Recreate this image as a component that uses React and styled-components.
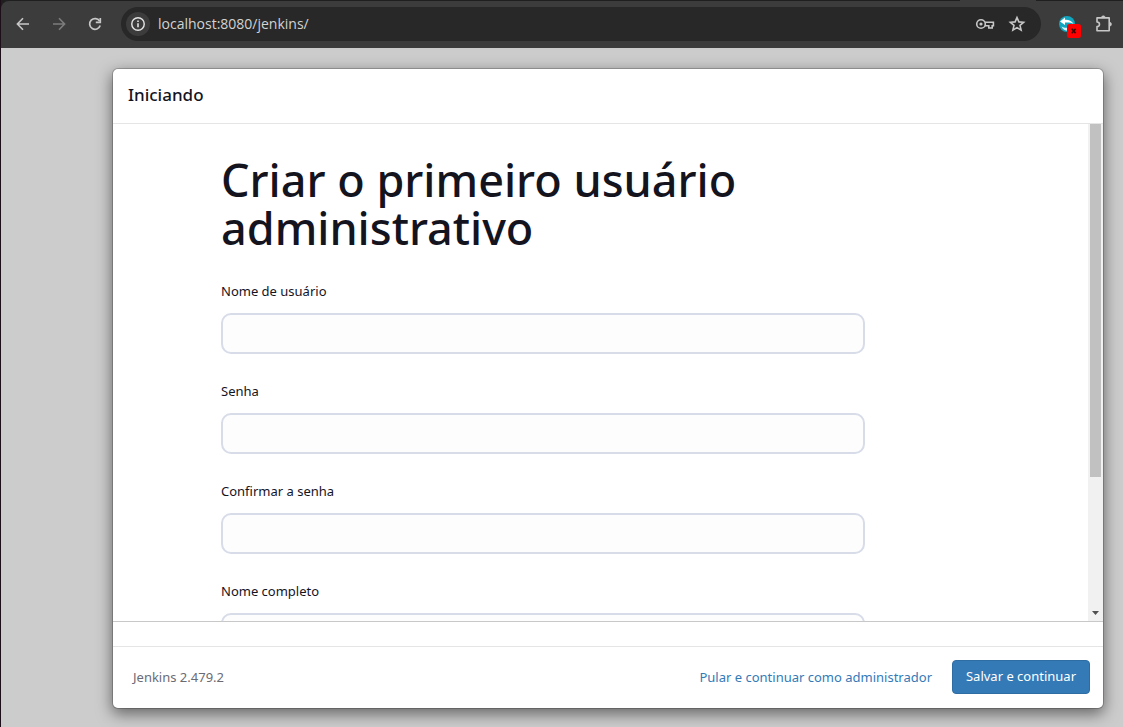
import React from "react";
import styled, { createGlobalStyle } from "styled-components";

const GlobalStyle = createGlobalStyle`
  *, *::before, *::after { box-sizing: border-box; }
  body {
    margin: 0;
    font-family: "Noto Sans", "Open Sans", sans-serif;
    font-size: 13px;
    line-height: 20px;
    color: #14141f;
  }
  button, input { font: inherit; }
`;

const Window = styled.div`
  display: flex;
  flex-direction: column;
  height: 100vh;
  min-height: 480px;
  overflow: hidden;
  border-left: 1px solid #1c0f1a;
  background: #1f1f1f;
`;

const TabStrip = styled.div`
  display: flex;
  justify-content: flex-end;
  flex: none;
  height: 1px;
  padding-right: 87px;
`;

const ActiveTab = styled.div`
  width: 76px;
  background: #3c3c3c;
`;

const Toolbar = styled.header`
  display: flex;
  align-items: center;
  flex: none;
  height: 47px;
  padding: 0 2px 2px 8px;
  background: #3c3c3c;
  border-radius: 8px 0 0 0;
`;

const NavGroup = styled.nav`
  display: flex;
  gap: 8px;
  margin-right: 12px;
`;

const IconButton = styled.button`
  display: flex;
  align-items: center;
  justify-content: center;
  flex: none;
  width: ${(p) => p.$width || 28}px;
  height: 28px;
  padding: 0;
  border: 0;
  background: none;
  color: ${(p) => (p.$dim ? "#7c7c7c" : "#c7c7c7")};
`;

const AddressBar = styled.div`
  display: flex;
  align-items: center;
  flex: 1;
  min-width: 0;
  height: 34px;
  margin-right: 11px;
  padding: 0 8px 0 5px;
  border-radius: 17px;
  background: #282828;
`;

const SiteInfo = styled.button`
  display: flex;
  align-items: center;
  justify-content: center;
  flex: none;
  width: 24px;
  height: 24px;
  padding: 0;
  border: 0;
  border-radius: 50%;
  background: #3c3c3c;
  color: #e3e3e3;
`;

const AddressInput = styled.input`
  flex: 1;
  min-width: 0;
  height: 24px;
  padding: 0 8px;
  border: 0;
  outline: 0;
  background: none;
  font-family: "Open Sans", sans-serif;
  font-size: 14px;
  color: #d2d2d2;
`;

const Backdrop = styled.main`
  display: flex;
  flex: 1;
  min-height: 0;
  padding: 20px 19px 18px 111px;
  background: #ccc;
`;

const Dialog = styled.section`
  display: flex;
  flex-direction: column;
  flex: 1;
  min-width: 0;
  border: 1px solid rgba(0, 0, 0, 0.2);
  border-radius: 6px;
  background: #fff;
  background-clip: padding-box;
  box-shadow: 0 5px 15px rgba(0, 0, 0, 0.5);
`;

const DialogHeader = styled.div`
  display: flex;
  align-items: center;
  flex: none;
  height: 55px;
  padding: 0 15px 2px;
  border-bottom: 1px solid #e5e5e5;
`;

const DialogTitle = styled.h4`
  margin: 0;
  font-size: 17px;
  font-weight: 500;
  line-height: 24px;
`;

const DialogBody = styled.div`
  display: flex;
  flex: 1;
  min-height: 0;
  border-bottom: 1px solid #c8c8c8;
`;

const FormPane = styled.form`
  flex: 1;
  min-width: 0;
  overflow: hidden;
  padding: 32px 115px 0 108px;
`;

const Fields = styled.div`
  width: calc(100% - 108px);
`;

const Heading = styled.h1`
  margin: 0 0 30px;
  font-size: 45px;
  font-weight: 500;
  line-height: 48px;
`;

const Field = styled.div`
  display: flex;
  flex-direction: column;
  gap: 12px;
  margin-bottom: 28px;
`;

const Label = styled.label`
  line-height: 19px;
`;

const TextInput = styled.input`
  width: 100%;
  height: 41px;
  padding: 0 12px;
  border: 2px solid #d7dce8;
  border-radius: 10px;
  background: #fdfdfd;
  outline: 0;
`;

const ScrollTrack = styled.div`
  display: flex;
  flex-direction: column;
  flex: none;
  width: 15px;
  padding: 0 2px;
  background: #f1f1f1;
`;

const ScrollThumb = styled.div`
  flex: 0 0 71%;
  background: #c1c1c1;
`;

const ScrollDown = styled.button`
  display: flex;
  align-items: center;
  justify-content: center;
  height: 17px;
  margin-top: auto;
  padding: 0;
  border: 0;
  background: none;
  color: #505050;
`;

const Progress = styled.div`
  flex: none;
  height: 24px;
`;

const DialogFooter = styled.footer`
  display: flex;
  align-items: center;
  gap: 20px;
  flex: none;
  height: 62px;
  padding: 0 13px 2px 20px;
  border-top: 1px solid #e5e5e5;
`;

const Version = styled.span`
  margin-right: auto;
  color: #6b6b73;
`;

const SkipLink = styled.a`
  color: #337ab7;
  text-decoration: none;
`;

const SaveButton = styled.button`
  min-width: 138px;
  height: 34px;
  padding: 0 12px 2px;
  border: 1px solid #2e6da4;
  border-radius: 4px;
  background: #337ab7;
  color: #fff;
`;

const Stroke = ({ size = 20, width = 2, children }) => (
  <svg width={size} height={size} viewBox="0 0 20 20" fill="none" stroke="currentColor" strokeWidth={width} aria-hidden="true">
    {children}
  </svg>
);

const BackIcon = () => (
  <Stroke width={1.6}><path d="M16 10H4.8M10 4.2 4.4 10l5.6 5.8" /></Stroke>
);
const ForwardIcon = () => (
  <Stroke width={1.6}><path d="M4 10h11.2M10 4.2l5.6 5.8-5.6 5.8" /></Stroke>
);
const ReloadIcon = () => (
  <Stroke width={1.7}>
    <path d="M14.6 7A5.4 5.4 0 1 0 15.2 11.6" />
    <path d="M15.3 4v4.3H10.8" />
  </Stroke>
);
const InfoIcon = () => (
  <Stroke size={16} width={1.8}>
    <circle cx="10" cy="10" r="7.8" />
    <path d="M10 9v5M10 5.6v2" strokeWidth="2" />
  </Stroke>
);
const KeyIcon = () => (
  <Stroke width={1.6}>
    <circle cx="6" cy="10" r="4.3" />
    <circle cx="6" cy="10" r="1.6" fill="currentColor" stroke="none" />
    <path d="M10 8.2h8.4v3.6h-1.2V14h-3.4v-2.2H10" />
  </Stroke>
);
const StarIcon = () => (
  <Stroke width={1.6}>
    <path d="m10 3.6 1.9 4.3 4.7.4-3.6 3.100 1.100 4.700L10 13.600l-4.100 2.500L7 11.400 3.400 8.300l4.700-.4z" />
  </Stroke>
);
const PuzzleIcon = () => (
  <Stroke width={1.6}>
    <path d="M3 3.9h12.2v12.8H3v-4.1c1.6 0 2.5-1 2.5-2.3S4.6 8 3 8z" strokeLinejoin="round" />
    <path d="M7.4 3.700a1.900 1.900 0 0 1 3.800 0zM15.600 8.300a1.900 1.900 0 0 1 0 3.800z" fill="currentColor" stroke="currentColor" strokeWidth=".6" />
  </Stroke>
);
const ExtensionIcon = () => (
  <svg width="26" height="28" viewBox="0 0 26 28" aria-hidden="true">
    <circle cx="11" cy="14" r="8" fill="#12a5c0" />
    <path d="M4 11.500 9 7.500v2.300c3.500-.3 6.500 1 8.500 4-2.500-1.300-5-1.600-8.500-1.300v2.500z" fill="#fff" />
    <path d="M5.500 16.500c2 1.300 4 1.500 7 1.200v3c-3 .2-5.500-1-7-4.200z" fill="#d8f1f5" />
    <rect x="11" y="14" width="14" height="14" rx="2.500" fill="#f00" />
    <path d="m15.700 18.700 4 4.600m0-4.600-4 4.600" stroke="#3a0000" strokeWidth="1.600" />
  </svg>
);
const DownArrow = () => (
  <svg width="7" height="4" viewBox="0 0 7 4" aria-hidden="true">
    <path d="M0 0h7L3.500 4z" fill="currentColor" />
  </svg>
);

const FIELDS = [
  { id: "username", label: "Nome de usuário", type: "text" },
  { id: "password", label: "Senha", type: "password" },
  { id: "confirm", label: "Confirmar a senha", type: "password" },
  { id: "fullname", label: "Nome completo", type: "text" },
];

export default function App() {
  return (
    <>
      <GlobalStyle />
      <Window>
        <TabStrip><ActiveTab /></TabStrip>
        <Toolbar>
          <NavGroup>
            <IconButton aria-label="Voltar"><BackIcon /></IconButton>
            <IconButton aria-label="Avançar" $dim><ForwardIcon /></IconButton>
            <IconButton aria-label="Recarregar"><ReloadIcon /></IconButton>
          </NavGroup>
          <AddressBar>
            <SiteInfo aria-label="Informações do site"><InfoIcon /></SiteInfo>
            <AddressInput aria-label="Endereço" defaultValue="localhost:8080/jenkins/" spellCheck={false} />
            <IconButton $width={32} aria-label="Senhas"><KeyIcon /></IconButton>
            <IconButton $width={32} aria-label="Favoritar"><StarIcon /></IconButton>
          </AddressBar>
          <IconButton $width={34} aria-label="Extensão"><ExtensionIcon /></IconButton>
          <IconButton $width={35} aria-label="Extensões"><PuzzleIcon /></IconButton>
        </Toolbar>
        <Backdrop>
          <Dialog role="dialog" aria-labelledby="dialog-title">
            <DialogHeader>
              <DialogTitle id="dialog-title">Iniciando</DialogTitle>
            </DialogHeader>
            <DialogBody>
              <FormPane id="first-user">
                <Fields>
                  <Heading>Criar o primeiro usuário administrativo</Heading>
                  {FIELDS.map((f) => (
                    <Field key={f.id}>
                      <Label htmlFor={f.id}>{f.label}</Label>
                      <TextInput id={f.id} type={f.type} />
                    </Field>
                  ))}
                </Fields>
              </FormPane>
              <ScrollTrack>
                <ScrollThumb />
                <ScrollDown aria-label="Rolar para baixo"><DownArrow /></ScrollDown>
              </ScrollTrack>
            </DialogBody>
            <Progress />
            <DialogFooter>
              <Version>Jenkins 2.479.2</Version>
              <SkipLink href="#">Pular e continuar como administrador</SkipLink>
              <SaveButton type="submit" form="first-user">Salvar e continuar</SaveButton>
            </DialogFooter>
          </Dialog>
        </Backdrop>
      </Window>
    </>
  );
}
